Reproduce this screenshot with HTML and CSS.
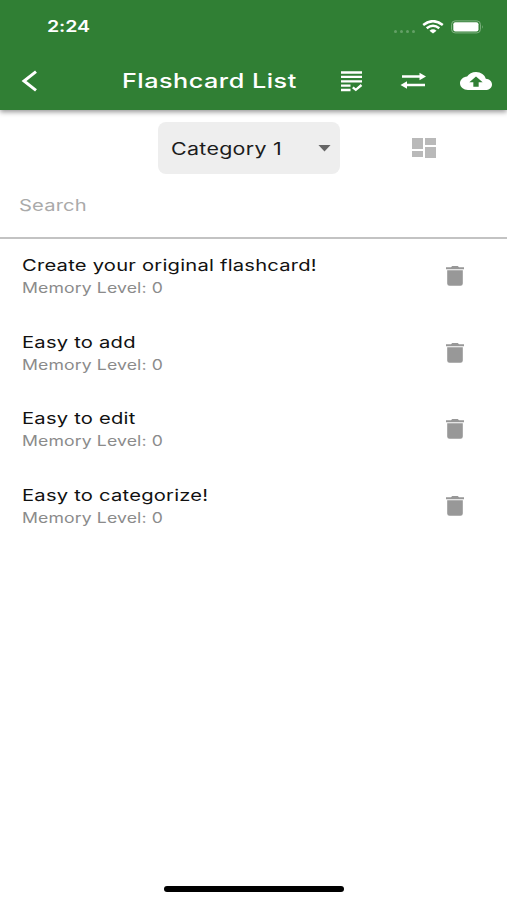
FILE: index.html
```html
<!DOCTYPE html>
<html lang="en">
<head>
<meta charset="utf-8">
<title>Flashcard List</title>
<link rel="stylesheet" href="styles.css">
</head>
<body>
<svg class="defs" width="0" height="0" aria-hidden="true">
  <symbol id="trash" viewBox="0 0 20 20" preserveAspectRatio="none"><path d="M1 1.2h5L7.2 0h5.6L14 1.2h5v2H1zM2.2 4.3h15.6v13.2q0 2.3-2.3 2.3h-11q-2.3 0-2.3-2.3z"/></symbol>
</svg>
<div class="screen">
  <header class="header">
    <div class="status">
      <span class="time wide">2:24</span>
      <div class="indicators">
        <div class="dots"><i></i><i></i><i></i><i></i></div>
        <svg class="wifi" viewBox="0 0 22 14" width="22" height="14" fill="none" stroke="#fff" stroke-width="2.5"><path d="M1.2 5Q11-2.7 20.8 5M4.7 8.3Q11 3.3 17.3 8.3"/><path d="M7.5 10.7Q11 7.8 14.5 10.7L11 13.6z" fill="#fff" stroke="none"/></svg>
        <svg class="battery" viewBox="0 0 33 14" width="33" height="14"><rect x=".6" y=".9" width="28.8" height="12" rx="3.5" fill="none" stroke="#82b384" stroke-width="1"/><rect x="2.3" y="2.3" width="25.2" height="9.2" rx="2" fill="#fff"/><path d="M31 5q1.6 1.9 0 3.8z" fill="#82b384"/></svg>
      </div>
    </div>
    <div class="toolbar">
      <svg class="back" viewBox="0 0 16 22" width="16" height="22" fill="none" stroke="#fff" stroke-width="3"><path d="M15 1.600L3 11l12 9.400"/></svg>
      <h1 class="title wide">Flashcard List</h1>
      <svg class="check" viewBox="0 0 23 21" width="23" height="21" fill="none" stroke="#fff" stroke-width="2.300"><path d="M1 1.500h21M1 5.900h21M1 10.300h21M1 14.700h9.500M1 19h9.500"/><path d="M12.800 16.300l3 2.500 5.700-4.800" stroke-width="2.400"/></svg>
      <svg class="swap" viewBox="0 0 27 18" width="27" height="18" fill="#fff"><path d="M2 3.300h17.500V.8l6.500 3.700-6.500 3.700V5.700H2zM25 11.800H7V9.300L.5 13 7 16.700v-2.500h18z"/></svg>
      <svg class="cloud" viewBox="0 4 24 16" width="32" height="18" preserveAspectRatio="none" fill="#fff"><path d="M19.350 10.040C18.670 6.590 15.640 4 12 4 9.110 4 6.600 5.640 5.350 8.040 2.340 8.360 0 10.910 0 14c0 3.310 2.690 6 6 6h13c2.760 0 5-2.240 5-5 0-2.640-2.050-4.780-4.650-4.960zM14 13v4h-4v-4H7l5-5 5 5h-3z"/></svg>
    </div>
  </header>
  <div class="filters">
    <div class="select"><span class="category wide">Category 1</span><i class="caret"></i></div>
    <div class="grid"><i></i><i></i><i></i><i></i></div>
  </div>
  <div class="search"><span class="placeholder wide">Search</span></div>
  <main class="list">
    <div class="row"><div><p class="name wide">Create your original flashcard!</p><p class="level wide">Memory Level: 0</p></div><svg class="trash"><use href="#trash"/></svg></div>
    <div class="row"><div><p class="name wide">Easy to add</p><p class="level wide">Memory Level: 0</p></div><svg class="trash"><use href="#trash"/></svg></div>
    <div class="row"><div><p class="name wide">Easy to edit</p><p class="level wide">Memory Level: 0</p></div><svg class="trash"><use href="#trash"/></svg></div>
    <div class="row"><div><p class="name wide">Easy to categorize!</p><p class="level wide">Memory Level: 0</p></div><svg class="trash"><use href="#trash"/></svg></div>
  </main>
  <div class="home"></div>
</div>
</body>
</html>
```
FILE: styles.css
```css
* { box-sizing: border-box; }
body { margin: 0; font-family: Inter, "Liberation Sans", sans-serif; background: #fff; }
h1, p { margin: 0; }
svg { display: block; flex: none; }
.defs { position: absolute; }
.screen { width: 507px; height: 900px; display: flex; flex-direction: column; overflow: hidden; }
.wide { display: block; width: max-content; white-space: nowrap; transform-origin: 0 50%; transform: scaleX(1.26); }
.header { height: 110px; flex: none; background: #307f34; color: #fff; box-shadow: 0 2px 5px rgba(0,0,0,.42); }
.status { height: 54px; padding: 0 23px 0 46.500px; display: flex; align-items: center; justify-content: space-between; }
.time { font-size: 15.500px; line-height: 20px; font-weight: 600; letter-spacing: -.1px; }
.indicators { display: flex; align-items: center; }
.dots { display: flex; gap: 3px; margin: 9px 7px 0 0; }
.dots i { width: 3px; height: 3px; border-radius: 50%; background: #64a067; }
.wifi { margin-right: 7px; }
.toolbar { height: 54px; display: grid; grid-template-columns: 101px 218px 60px 59.500px 47px; padding-left: 21px; align-items: center; }
.title { font-size: 20px; line-height: 26px; font-weight: 500; letter-spacing: .4px; }
.filters { height: 65px; flex: none; padding: 12px 0 0 158px; display: flex; }
.select { width: 182px; height: 52px; border-radius: 8px; background: #eee; display: flex; align-items: center; justify-content: space-between; padding: 0 9px 0 13px; color: #1c1c1c; }
.category { font-size: 17px; line-height: 24px; letter-spacing: .24px; padding-top: 1px; }
.caret { width: 13px; height: 7px; background: #666; clip-path: polygon(0 0, 100% 0, 50% 100%); }
.grid { display: grid; grid-template-columns: 11px 11px; grid-template-rows: 11px 6px; gap: 2px; width: 24px; height: 20px; margin: 16px 0 0 71.500px; }
.grid i { background: #b9b9b9; }
.grid i:nth-child(2) { height: 7px; }
.grid i:nth-child(4) { height: 11px; margin-top: -4px; }
.search { height: 64px; flex: none; padding: 18px 0 0 19px; border-bottom: 2px solid #c3c3c3; }
.placeholder { font-size: 16px; line-height: 24px; letter-spacing: .13px; color: #aaa; }
.list { flex: 1; padding: 14px 42px 0 22px; }
.row { height: 76.700px; display: flex; justify-content: space-between; }
.name { font-size: 16px; line-height: 24px; letter-spacing: .18px; color: #111; }
.level { font-size: 14px; line-height: 20px; letter-spacing: .09px; color: #8b8b8b; padding-top: 1px; }
.trash { width: 20px; height: 20px; margin-top: 13px; fill: #989898; }
.home { width: 180px; height: 6px; flex: none; margin: 0 0 8px 164px; border-radius: 3px; background: #000; }
```
